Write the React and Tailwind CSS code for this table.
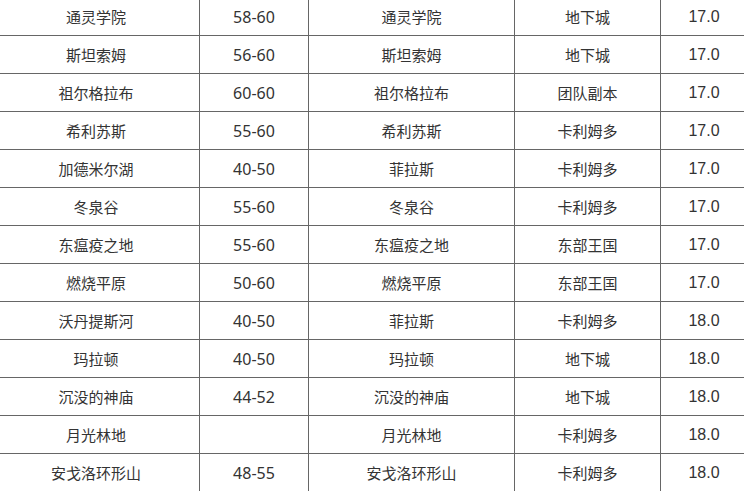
import React from "react";

const rows = [
  ["通灵学院", "58-60", "通灵学院", "地下城", "17.0"],
  ["斯坦索姆", "56-60", "斯坦索姆", "地下城", "17.0"],
  ["祖尔格拉布", "60-60", "祖尔格拉布", "团队副本", "17.0"],
  ["希利苏斯", "55-60", "希利苏斯", "卡利姆多", "17.0"],
  ["加德米尔湖", "40-50", "菲拉斯", "卡利姆多", "17.0"],
  ["冬泉谷", "55-60", "冬泉谷", "卡利姆多", "17.0"],
  ["东瘟疫之地", "55-60", "东瘟疫之地", "东部王国", "17.0"],
  ["燃烧平原", "50-60", "燃烧平原", "东部王国", "17.0"],
  ["沃丹提斯河", "40-50", "菲拉斯", "卡利姆多", "18.0"],
  ["玛拉顿", "40-50", "玛拉顿", "地下城", "18.0"],
  ["沉没的神庙", "44-52", "沉没的神庙", "地下城", "18.0"],
  ["月光林地", "", "月光林地", "卡利姆多", "18.0"],
  ["安戈洛环形山", "48-55", "安戈洛环形山", "卡利姆多", "18.0"],
];

const cjk = "font-['Noto_Sans','Noto_Sans_CJK_SC',sans-serif]";

function Row({ r }) {
  return (
    <div className="flex h-[38px] border-b border-[#666] text-[#333]">
      <div className={`w-[207px] shrink-0 flex items-center justify-center pt-px border-r border-[#666] text-[15px] ${cjk}`}>
        {r[0]}
      </div>
      <div className={`w-[109px] shrink-0 flex items-center justify-center pt-px border-r border-[#666] text-[16px] ${cjk}`}>
        {r[1]}
      </div>
      <div className={`w-[206px] shrink-0 flex items-center justify-center pt-px border-r border-[#666] text-[15px] ${cjk}`}>
        {r[2]}
      </div>
      <div className={`w-[146px] shrink-0 flex items-center justify-center pt-px border-r border-[#666] text-[15px] ${cjk}`}>
        {r[3]}
      </div>
      <div className="w-[86px] shrink-0 flex items-center justify-center pt-px text-[16px] font-['Liberation_Sans',Arial,sans-serif]">
        {r[4]}
      </div>
    </div>
  );
}

export default function App() {
  return (
    <div className="w-[744px] h-[491px] overflow-hidden bg-white">
      <div className="-mt-[2px] -ml-[7px] w-[760px]">
        {rows.map((r, i) => (
          <Row key={i} r={r} />
        ))}
      </div>
    </div>
  );
}
